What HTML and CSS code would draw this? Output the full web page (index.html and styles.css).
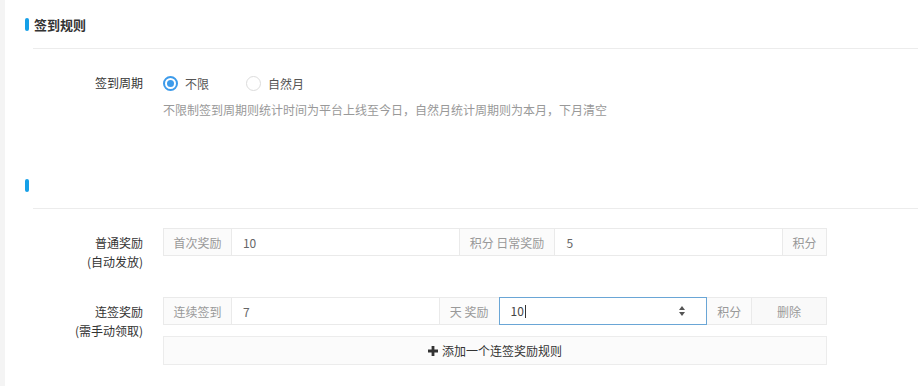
FILE: index.html
```html
<!DOCTYPE html>
<html lang="zh-CN">
<head>
  <meta charset="UTF-8">
  <title>签到规则</title>
  <link rel="stylesheet" href="styles.css">
</head>
<body>
  <div class="page">

    <div class="section-title">
      <span class="mark"></span>
      <h2>签到规则</h2>
    </div>

    <div class="form-row period">
      <label class="row-label">签到周期</label>
      <div class="row-body">
        <div class="radios">
          <span class="radio checked"></span><span class="radio-text">不限</span>
          <span class="radio"></span><span class="radio-text">自然月</span>
        </div>
        <p class="help">不限制签到周期则统计时间为平台上线至今日，自然月统计周期则为本月，下月清空</p>
      </div>
    </div>

    <div class="section-title second">
      <span class="mark"></span>
      <h2></h2>
    </div>

    <div class="form-row">
      <label class="row-label">普通奖励<br>(自动发放)</label>
      <div class="row-body">
        <div class="input-group">
          <span class="addon w68">首次奖励</span>
          <input class="field w228" type="text" value="10">
          <span class="addon w96">积分 日常奖励</span>
          <input class="field w228" type="text" value="5">
          <span class="addon w44">积分</span>
        </div>
      </div>
    </div>

    <div class="form-row">
      <label class="row-label">连签奖励<br>(需手动领取)</label>
      <div class="row-body">
        <div class="input-group">
          <span class="addon w68">连续签到</span>
          <input class="field w208" type="text" value="7">
          <span class="addon w60">天 奖励</span>
          <div class="field w208 focus">
            <span class="val">10</span><span class="caret"></span>
            <svg class="spin" width="8" height="12" viewBox="0 0 8 12">
              <path d="M4 1 L7 5 L1 5 Z" fill="#555"/>
              <path d="M4 11 L7 7 L1 7 Z" fill="#555"/>
            </svg>
          </div>
          <span class="addon w45">积分</span>
          <span class="btn-del">删除</span>
        </div>
        <div class="add-rule">
          <svg width="10" height="10" viewBox="0 0 10 10"><path d="M3.6 0h2.8v3.6H10v2.8H6.4V10H3.6V6.4H0V3.6h3.6z" fill="#333"/></svg>
          <span>添加一个连签奖励规则</span>
        </div>
      </div>
    </div>

  </div>
</body>
</html>
```

FILE: styles.css
```css
* {
  margin: 0;
  padding: 0;
  box-sizing: border-box;
}

body {
  background: #f4f4f4;
  font-family: "Noto Sans CJK SC", "Noto Sans", sans-serif;
  font-size: 12px;
  color: #333;
}

.page {
  margin-left: 5px;
  min-height: 386px;
  background: #fff;
}

.section-title {
  display: flex;
  align-items: center;
  height: 49px;
  padding-left: 20px;
  position: relative;
}

.section-title::after {
  content: "";
  position: absolute;
  left: 28px;
  right: 5px;
  bottom: 0;
  border-bottom: 1px solid #ececec;
}

.section-title.second {
  margin-top: 43px;
  height: 47px;
}

.mark {
  width: 4px;
  height: 13px;
  border-radius: 2px;
  background: #16a0e8;
  margin-right: 5px;
}

.section-title h2 {
  font-size: 13px;
  font-weight: bold;
  color: #333;
}

.form-row {
  display: flex;
  margin-top: 19px;
}

.form-row + .form-row {
  margin-top: 26px;
}

.form-row.period {
  margin-top: 24px;
}

.row-label {
  width: 158px;
  padding-right: 20px;
  padding-top: 5px;
  text-align: right;
  line-height: 19px;
  color: #333;
}

.period .row-label {
  padding-top: 0;
  line-height: 20px;
}

.radios {
  display: flex;
  align-items: center;
  height: 20px;
}

.radio {
  width: 15px;
  height: 15px;
  border: 1px solid #dcdcdc;
  border-radius: 50%;
  background: #fff;
  display: flex;
  align-items: center;
  justify-content: center;
}

.radio.checked {
  border: 2px solid #3d9bea;
}

.radio.checked::after {
  content: "";
  width: 7px;
  height: 7px;
  border-radius: 50%;
  background: #3d9bea;
}

.radio-text {
  color: #555;
  margin-left: 7px;
  margin-right: 37px;
}

.help {
  color: #999;
  margin-top: 8px;
  line-height: 18px;
}

.input-group {
  display: flex;
  width: 664px;
  height: 28px;
}

.addon {
  display: flex;
  align-items: center;
  justify-content: center;
  background: #fbfbfb;
  border: 1px solid #eaeaea;
  color: #999;
  white-space: nowrap;
}

.addon + .field,
.field + .addon,
.addon + .btn-del {
  margin-left: -1px;
}

.field {
  height: 28px;
  border: 1px solid #eaeaea;
  padding: 0 11px;
  font-family: inherit;
  font-size: 12px;
  color: #666;
  outline: none;
  background: #fff;
}

.field.focus {
  display: flex;
  align-items: center;
  border-color: #6aa6d6;
  position: relative;
  z-index: 1;
  color: #444;
}

.val {
  line-height: 1;
}

.caret {
  width: 1px;
  height: 13px;
  background: #333;
  margin-left: 1px;
}

.spin {
  margin-left: auto;
  margin-right: 9px;
}

.btn-del {
  display: flex;
  align-items: center;
  justify-content: center;
  width: 76px;
  background: #f9f9f9;
  border: 1px solid #eaeaea;
  color: #999;
}

.w44 { width: 45px; }
.w45 { width: 46px; }
.w60 { width: 61px; }
.w68 { width: 69px; }
.w96 { width: 97px; }
.w208 { width: 209px; }
.w228 { width: 229px; }

.add-rule {
  display: flex;
  align-items: center;
  justify-content: center;
  gap: 4px;
  width: 664px;
  height: 29px;
  margin-top: 11px;
  background: #fbfbfb;
  border: 1px solid #ececec;
  color: #333;
}
```
